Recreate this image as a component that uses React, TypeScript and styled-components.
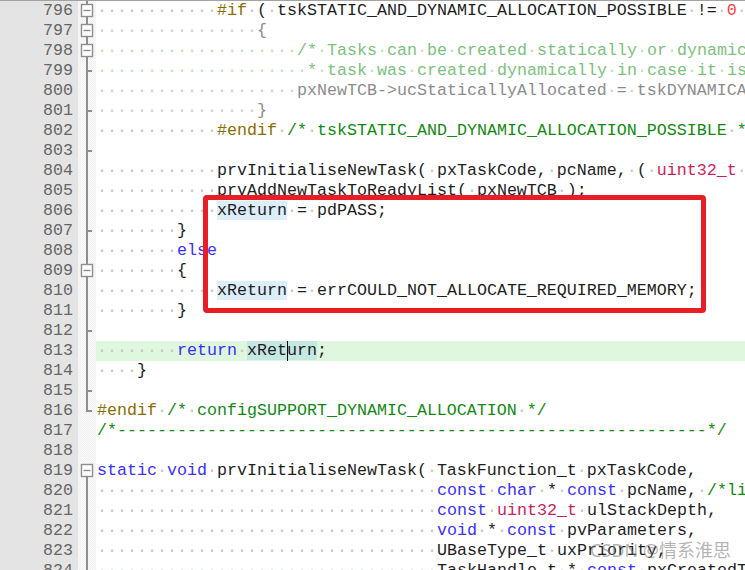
import React from "react";
import styled, { createGlobalStyle } from "styled-components";

type Kind = "id" | "pp" | "cm" | "cmi" | "in" | "kw" | "ty" | "num" | "hl" | "hlc";
type Fold = "box" | "boxTop" | "line" | "tick" | "corner" | "none";
type Tok = [Kind, string];

interface Line {
  n: number;
  fold: Fold;
  toks: Tok[];
  current?: boolean;
}

const colors: Record<Kind, string> = {
  id: "#1e1e1e",
  pp: "#8a6e00",
  cm: "#128a12",
  cmi: "#7cc27c",
  in: "#8c8c8c",
  kw: "#3a30ff",
  ty: "#cc1f5a",
  num: "#ff3c3c",
  hl: "#1e1e1e",
  hlc: "#1e1e1e",
};

// whitespace markers take a pale tint of the token they sit in
const dotColors: Record<Kind, string> = {
  id: "#c6c6c6",
  pp: "#d6c890",
  cm: "#a6d6a6",
  cmi: "#bce4bc",
  in: "#cfcfcf",
  kw: "#c6c6c6",
  ty: "#eaaabc",
  num: "#ffb8b8",
  hl: "#c6c6c6",
  hlc: "#c6c6c6",
};

const sp = (n: number) => " ".repeat(n);

const lines: Line[] = [
  { n: 796, fold: "box", toks: [["id", sp(12)], ["pp", "#if"], ["id", " ( tskSTATIC_AND_DYNAMIC_ALLOCATION_POSSIBLE != "], ["num", "0"], ["id", " )"]] },
  { n: 797, fold: "box", toks: [["in", sp(16) + "{"]] },
  { n: 798, fold: "box", toks: [["cmi", sp(20) + "/* Tasks can be created statically or dynamically, so note this"]] },
  { n: 799, fold: "tick", toks: [["cmi", sp(21) + "* task was created dynamically in case it is later deleted. */"]] },
  { n: 800, fold: "line", toks: [["in", sp(20) + "pxNewTCB->ucStaticallyAllocated = tskDYNAMICALLY_ALLOCATED_STACK_AND_TCB;"]] },
  { n: 801, fold: "tick", toks: [["in", sp(16) + "}"]] },
  { n: 802, fold: "line", toks: [["id", sp(12)], ["pp", "#endif"], ["cm", " /* tskSTATIC_AND_DYNAMIC_ALLOCATION_POSSIBLE */"]] },
  { n: 803, fold: "tick", toks: [] },
  { n: 804, fold: "line", toks: [["id", sp(12) + "prvInitialiseNewTask( pxTaskCode, pcName, ( "], ["ty", "uint32_t"], ["id", " ) ulStackDepth, pvParameters, uxPriority, pxCreatedTask );"]] },
  { n: 805, fold: "line", toks: [["id", sp(12) + "prvAddNewTaskToReadyList( pxNewTCB );"]] },
  { n: 806, fold: "line", toks: [["id", sp(12)], ["hl", "xReturn"], ["id", " = pdPASS;"]] },
  { n: 807, fold: "tick", toks: [["id", sp(8) + "}"]] },
  { n: 808, fold: "line", toks: [["id", sp(8)], ["kw", "else"]] },
  { n: 809, fold: "box", toks: [["id", sp(8) + "{"]] },
  { n: 810, fold: "line", toks: [["id", sp(12)], ["hl", "xReturn"], ["id", " = errCOULD_NOT_ALLOCATE_REQUIRED_MEMORY;"]] },
  { n: 811, fold: "line", toks: [["id", sp(8) + "}"]] },
  { n: 812, fold: "tick", toks: [] },
  { n: 813, fold: "line", current: true, toks: [["id", sp(8)], ["kw", "return"], ["id", " "], ["hlc", "xReturn"], ["id", ";"]] },
  { n: 814, fold: "line", toks: [["id", sp(4) + "}"]] },
  { n: 815, fold: "tick", toks: [] },
  { n: 816, fold: "corner", toks: [["pp", "#endif"], ["cm", " /* configSUPPORT_DYNAMIC_ALLOCATION */"]] },
  { n: 817, fold: "none", toks: [["cm", "/*" + "-".repeat(59) + "*/"]] },
  { n: 818, fold: "none", toks: [] },
  { n: 819, fold: "boxTop", toks: [["kw", "static"], ["id", " "], ["kw", "void"], ["id", " prvInitialiseNewTask( TaskFunction_t pxTaskCode,"]] },
  { n: 820, fold: "line", toks: [["id", sp(34)], ["kw", "const"], ["id", " "], ["kw", "char"], ["id", " * "], ["kw", "const"], ["id", " pcName, "], ["cm", "/*lint !e971 Unqualified char types are allowed for strings. */"]] },
  { n: 821, fold: "line", toks: [["id", sp(34)], ["kw", "const"], ["id", " "], ["ty", "uint32_t"], ["id", " ulStackDepth,"]] },
  { n: 822, fold: "line", toks: [["id", sp(34)], ["kw", "void"], ["id", " * "], ["kw", "const"], ["id", " pvParameters,"]] },
  { n: 823, fold: "line", toks: [["id", sp(34) + "UBaseType_t uxPriority,"]] },
  { n: 824, fold: "line", toks: [["id", sp(34) + "TaskHandle_t * "], ["kw", "const"], ["id", " pxCreatedTask,"]] },
];

const GlobalStyle = createGlobalStyle`
  html, body {
    margin: 0;
    padding: 0;
    background: #ffffff;
  }
`;

const Screen = styled.div`
  position: relative;
  width: 745px;
  height: 570px;
  overflow: hidden;
  background: #ffffff;
  border-top: 1px solid #a2a2a2;
  box-sizing: border-box;
`;

const Editor = styled.div`
  display: flex;
  flex-direction: column;
  font-family: "Liberation Mono", "Courier New", monospace;
  font-size: 16.6667px;
  line-height: 20px;
`;

const Row = styled.div`
  display: grid;
  grid-template-columns: 78px 18px 1fr;
  height: 20px;
`;

const LineNo = styled.div`
  background: #e4e4e4;
  color: #666666;
  text-align: right;
  padding-right: 5px;
`;

const FoldMargin = styled.div`
  background: repeating-conic-gradient(#efefef 0 25%, #fbfbfb 0 50%) 0 0 / 2px 2px;
  height: 20px;
  svg {
    display: block;
  }
`;

const CodeCell = styled.div<{ $current?: boolean }>`
  background: ${(p) => (p.$current ? "#dff7df" : "transparent")};
  padding-left: 1px;
  white-space: pre;
  overflow: hidden;
`;

const Code = styled.span<{ $k: Kind }>`
  color: ${(p) => colors[p.$k]};
  background: ${(p) =>
    p.$k === "hl" || p.$k === "hlc" ? "rgba(140, 200, 240, 0.3)" : "transparent"};
`;

const Dot = styled.span<{ $k: Kind }>`
  color: ${(p) => dotColors[p.$k]};
`;

const Caret = styled.span`
  display: inline-block;
  width: 1px;
  margin-right: -1px;
  height: 20px;
  vertical-align: top;
  background: #000000;
`;

const Marker = styled.div`
  position: absolute;
  left: 203px;
  top: 194px;
  width: 503px;
  height: 118px;
  box-sizing: border-box;
  border: 5px solid #e91d25;
  border-radius: 4px;
`;

const Watermark = styled.div`
  position: absolute;
  left: 590px;
  top: 538px;
  font-family: "Noto Sans", "Noto Sans CJK SC", sans-serif;
  font-size: 18px;
  line-height: 22px;
  color: rgba(130, 130, 130, 0.6);
  white-space: nowrap;
`;

const FOLD = "#8e8e8e";

const FoldIcon: React.FC<{ kind: Fold }> = ({ kind }) => (
  <svg width="18" height="20" viewBox="0 0 18 20">
    {(kind === "line" || kind === "tick" || kind === "box") && (
      <rect x="8" y="0" width="2" height="20" fill={FOLD} />
    )}
    {kind === "boxTop" && <rect x="8" y="10" width="2" height="10" fill={FOLD} />}
    {kind === "tick" && <rect x="10" y="9" width="4" height="2" fill={FOLD} />}
    {kind === "corner" && (
      <>
        <rect x="8" y="0" width="2" height="11" fill={FOLD} />
        <rect x="10" y="9" width="4" height="2" fill={FOLD} />
      </>
    )}
    {(kind === "box" || kind === "boxTop") && (
      <>
        <rect x="3.5" y="3.5" width="11" height="12" fill="#ffffff" stroke={FOLD} strokeWidth="1.4" />
        <line x1="5.5" y1="9.5" x2="12.5" y2="9.5" stroke={FOLD} strokeWidth="1.4" />
      </>
    )}
  </svg>
);

const Token: React.FC<{ tok: Tok }> = ({ tok }) => {
  const [k, t] = tok;
  const parts = t.split(/( )/);
  return (
    <Code $k={k}>
      {parts.map((p, i) => {
        if (p === " ") return <Dot key={i} $k={k}>·</Dot>;
        if (k === "hlc" && p === "xReturn")
          return (
            <React.Fragment key={i}>
              xRet
              <Caret />
              urn
            </React.Fragment>
          );
        return p;
      })}
    </Code>
  );
};

const App: React.FC = () => {
  return (
    <>
      <GlobalStyle />
      <Screen>
        <Editor>
          {lines.map((line) => (
            <Row key={line.n}>
              <LineNo>{line.n}</LineNo>
              <FoldMargin>
                <FoldIcon kind={line.fold} />
              </FoldMargin>
              <CodeCell $current={line.current}>
                {line.toks.map((tok, i) => (
                  <Token key={i} tok={tok} />
                ))}
              </CodeCell>
            </Row>
          ))}
        </Editor>
        <Marker />
        <Watermark>CSDN @情系淮思</Watermark>
      </Screen>
    </>
  );
};

export default App;
